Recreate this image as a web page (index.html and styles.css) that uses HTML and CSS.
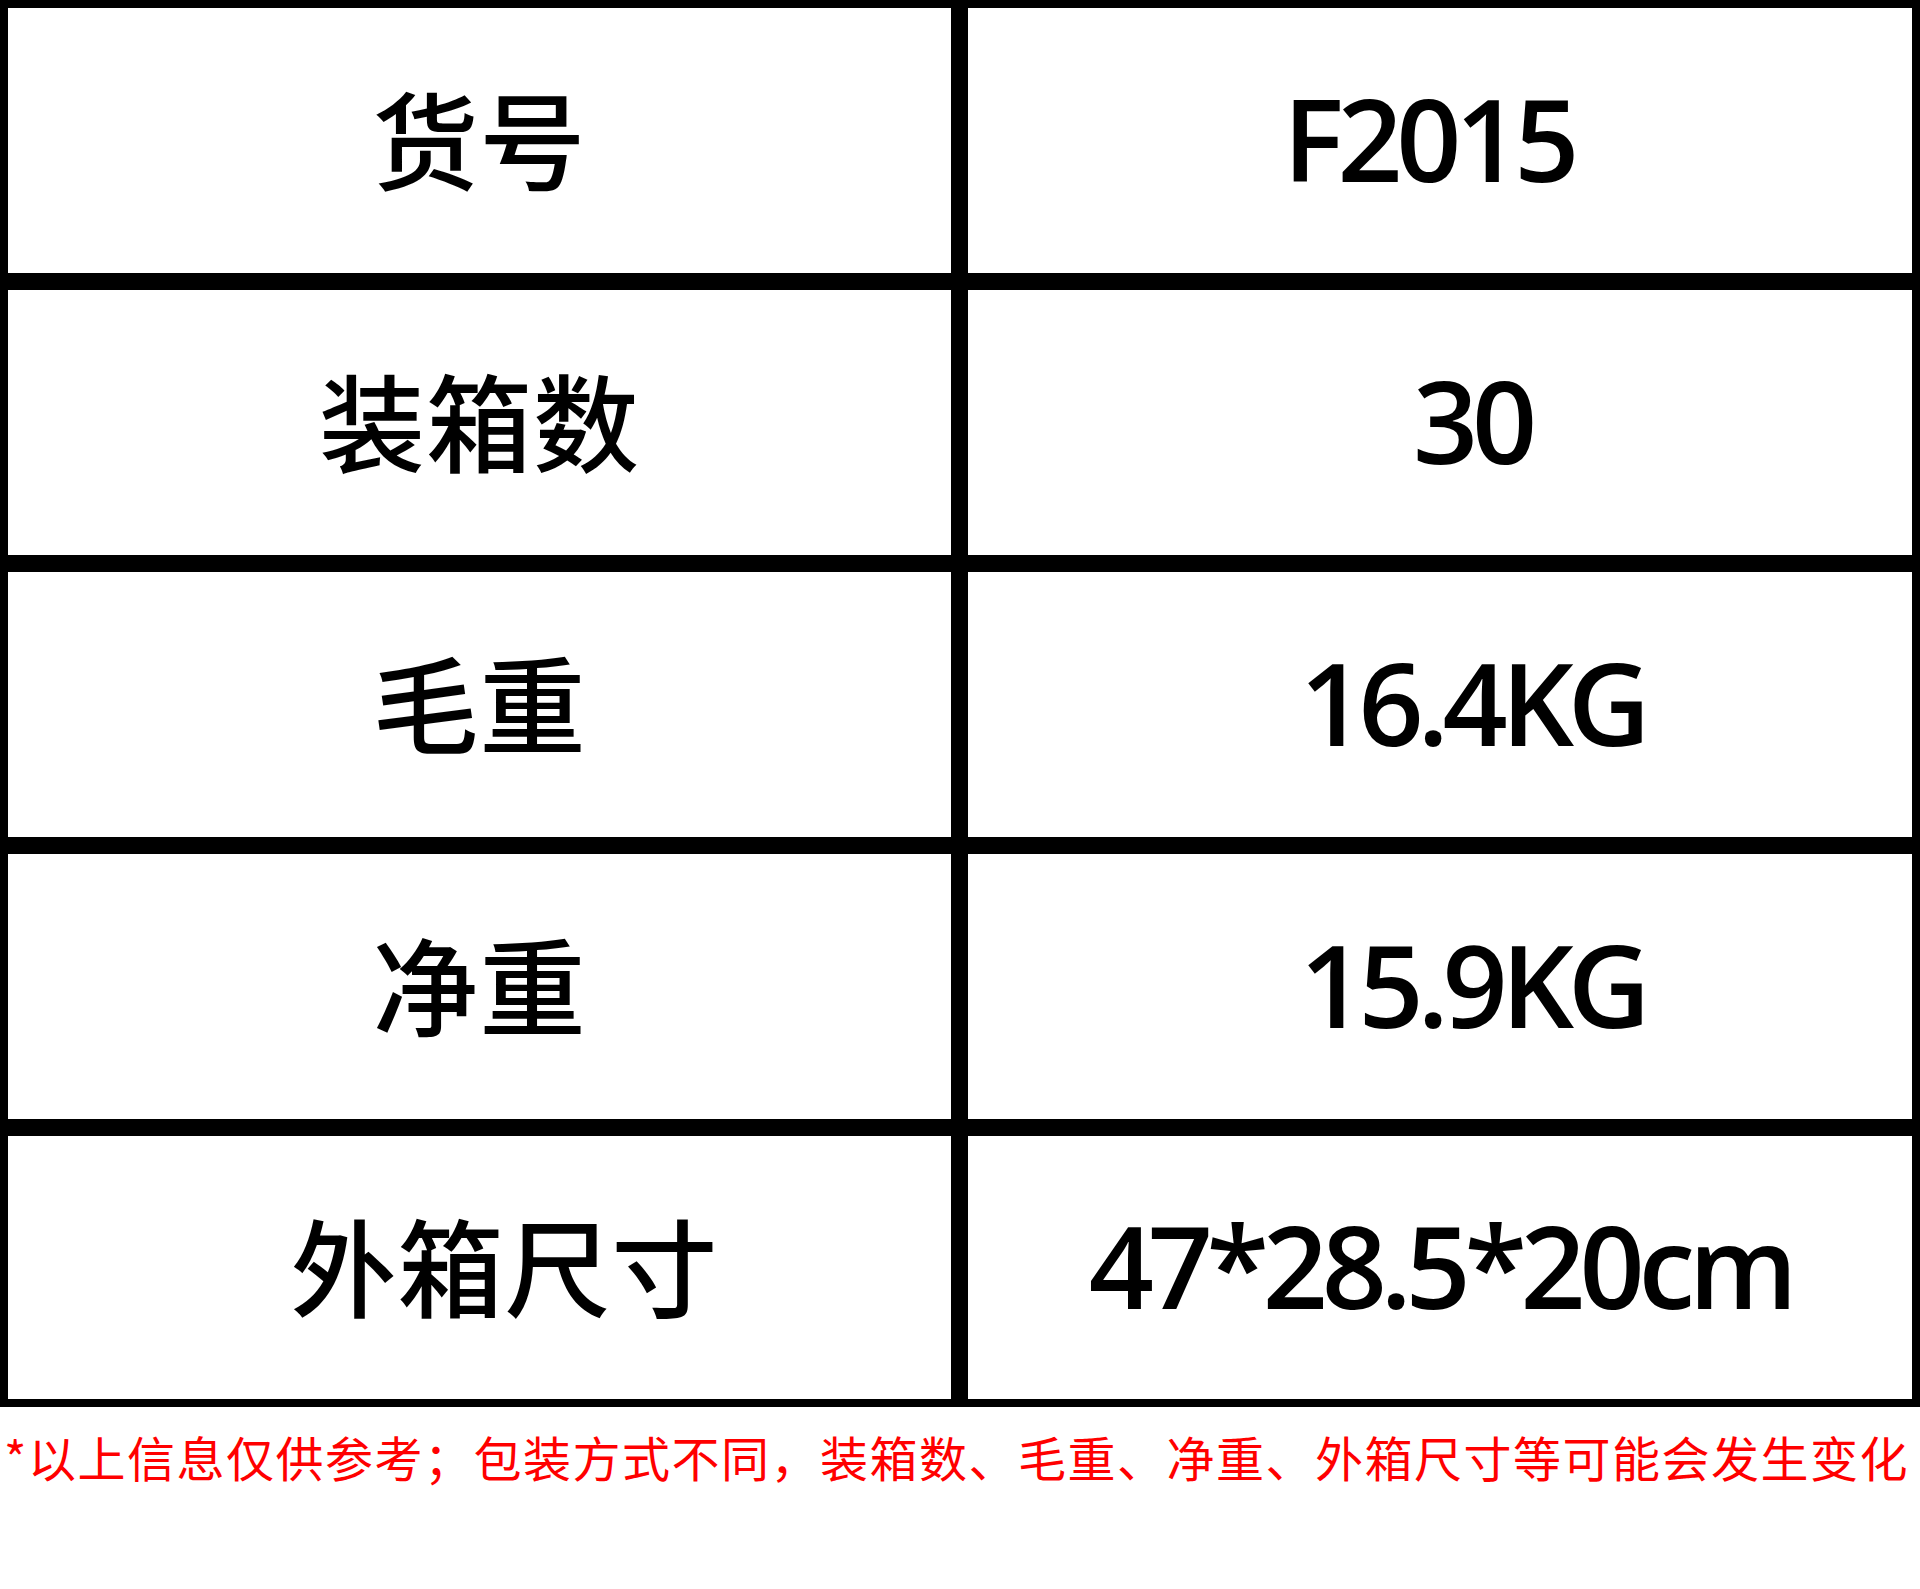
FILE: index.html
```html
<!DOCTYPE html>
<html lang="zh-CN">
<head>
<meta charset="utf-8">
<title>包装信息</title>
<link rel="stylesheet" href="styles.css">
</head>
<body>
<main class="sheet">
  <div class="spec-table">
    <div class="cell label">货号</div>
    <div class="cell value shift-left">F2015</div>
    <div class="cell label">装箱数</div>
    <div class="cell value shift-right">30</div>
    <div class="cell label">毛重</div>
    <div class="cell value shift-right">16.4KG</div>
    <div class="cell label">净重</div>
    <div class="cell value shift-right">15.9KG</div>
    <div class="cell label label-wide">外箱尺寸</div>
    <div class="cell value">47*28.5*20cm</div>
  </div>
  <p class="note">*以上信息仅供参考；包装方式不同，装箱数、毛重、净重、外箱尺寸等可能会发生变化</p>
</main>
</body>
</html>
```

FILE: styles.css
```css
html, body {
  margin: 0;
  padding: 0;
  background: #fff;
}

.sheet {
  width: 1920px;
  height: 1589px;
  background: #fff;
}

.spec-table {
  box-sizing: border-box;
  width: 1920px;
  display: grid;
  grid-template-columns: 943px 944px;
  grid-template-rows: repeat(4, 265px) 263px;
  gap: 17px;
  padding: 8px;
  background: #000;
}

.cell {
  background: #fff;
  display: flex;
  align-items: center;
  justify-content: center;
  color: #000;
  white-space: nowrap;
}

.label {
  font-family: "Noto Sans CJK SC", "Noto Sans", sans-serif;
  font-weight: 500;
  font-size: 106px;
  line-height: 1;
  letter-spacing: 1px;
  padding-bottom: 10px;
}

.label-wide {
  padding-left: 50px;
}

.value {
  font-family: "Open Sans", "Noto Sans", sans-serif;
  font-weight: 600;
  font-size: 114px;
  line-height: 1;
  letter-spacing: -0.055em;
  padding-bottom: 6px;
}

.shift-left {
  padding-right: 24px;
}

.shift-right {
  padding-left: 64px;
}

.note {
  margin: 20px 0 0;
  padding-left: 4px;
  font-family: "Noto Sans CJK SC", "Noto Sans", sans-serif;
  font-weight: 400;
  font-size: 48px;
  line-height: 58px;
  letter-spacing: 1.5px;
  color: #ff0000;
  white-space: nowrap;
}
```
